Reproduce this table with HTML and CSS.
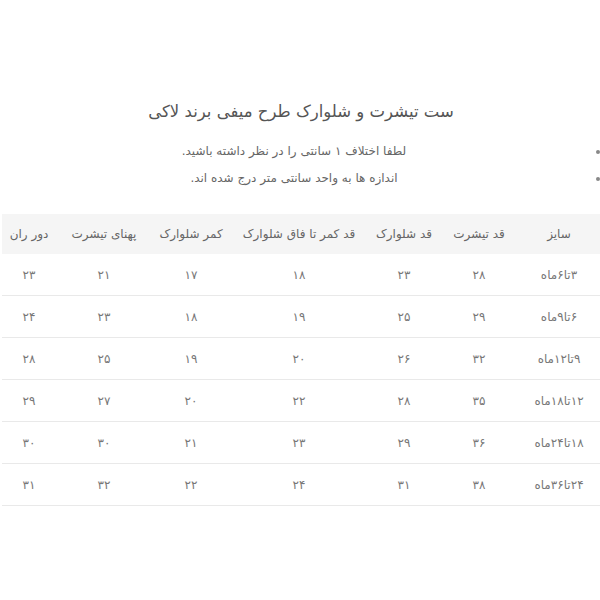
FILE: index.html
```html
<!DOCTYPE html>
<html lang="fa" dir="rtl">
<head>
<meta charset="utf-8">
<link rel="stylesheet" href="styles.css">
</head>
<body>
<div class="page">
  <h2 class="title">ست تیشرت و شلوارک طرح میفی برند لاکی</h2>
  <ul class="notes">
    <li>لطفا اختلاف ۱ سانتی را در نظر داشته باشید.</li>
    <li>اندازه ها به واحد سانتی متر درج شده اند.</li>
  </ul>
  <table class="sizes">
    <colgroup>
      <col class="c1"><col class="c2"><col class="c3"><col class="c4"><col class="c5"><col class="c6"><col class="c7">
    </colgroup>
    <thead>
      <tr><th>سایز</th><th>قد تیشرت</th><th>قد شلوارک</th><th>قد کمر تا فاق شلوارک</th><th>کمر شلوارک</th><th>پهنای تیشرت</th><th>دور ران</th></tr>
    </thead>
    <tbody>
      <tr><td>۳تا۶ماه</td><td>۲۸</td><td>۲۳</td><td>۱۸</td><td>۱۷</td><td>۲۱</td><td>۲۳</td></tr>
      <tr><td>۶تا۹ماه</td><td>۲۹</td><td>۲۵</td><td>۱۹</td><td>۱۸</td><td>۲۳</td><td>۲۴</td></tr>
      <tr><td>۹تا۱۲ماه</td><td>۳۲</td><td>۲۶</td><td>۲۰</td><td>۱۹</td><td>۲۵</td><td>۲۸</td></tr>
      <tr><td>۱۲تا۱۸ماه</td><td>۳۵</td><td>۲۸</td><td>۲۲</td><td>۲۰</td><td>۲۷</td><td>۲۹</td></tr>
      <tr><td>۱۸تا۲۴ماه</td><td>۳۶</td><td>۲۹</td><td>۲۳</td><td>۲۱</td><td>۳۰</td><td>۳۰</td></tr>
      <tr><td>۲۴تا۳۶ماه</td><td>۳۸</td><td>۳۱</td><td>۲۴</td><td>۲۲</td><td>۳۲</td><td>۳۱</td></tr>
    </tbody>
  </table>
</div>
</body>
</html>
```

FILE: styles.css
```css
html, body {
  margin: 0;
  padding: 0;
  background: #ffffff;
}
body {
  font-family: "DejaVu Sans", "Noto Sans", sans-serif;
  color: #666666;
}
.page {
  width: 598px;
  padding-top: 98px;
}
.title {
  margin: 0;
  text-align: center;
  font-size: 16.5px;
  font-weight: normal;
  color: #555555;
  line-height: 28px;
}
.notes {
  margin: 12px 0 0 0;
  padding: 0 14px 0 0;
  list-style: disc;
  text-align: center;
  font-size: 12px;
  color: #666666;
  line-height: 27px;
}
.notes li::marker {
  color: #888888;
}
.sizes {
  margin-top: 22px;
  width: 598px;
  border-collapse: collapse;
  table-layout: fixed;
  font-size: 12px;
}
.c1 { width: 82px; }
.c2 { width: 78px; }
.c3 { width: 72px; }
.c4 { width: 138px; }
.c5 { width: 78px; }
.c6 { width: 96px; }
.c7 { width: 54px; }
.sizes th {
  background: #f5f5f5;
  height: 40px;
  padding: 0;
  font-weight: normal;
  color: #666666;
  text-align: center;
  white-space: nowrap;
}
.sizes td {
  height: 41px;
  padding: 0;
  text-align: center;
  color: #777777;
  border-bottom: 1px solid #e9e9e9;
  white-space: nowrap;
}
```
